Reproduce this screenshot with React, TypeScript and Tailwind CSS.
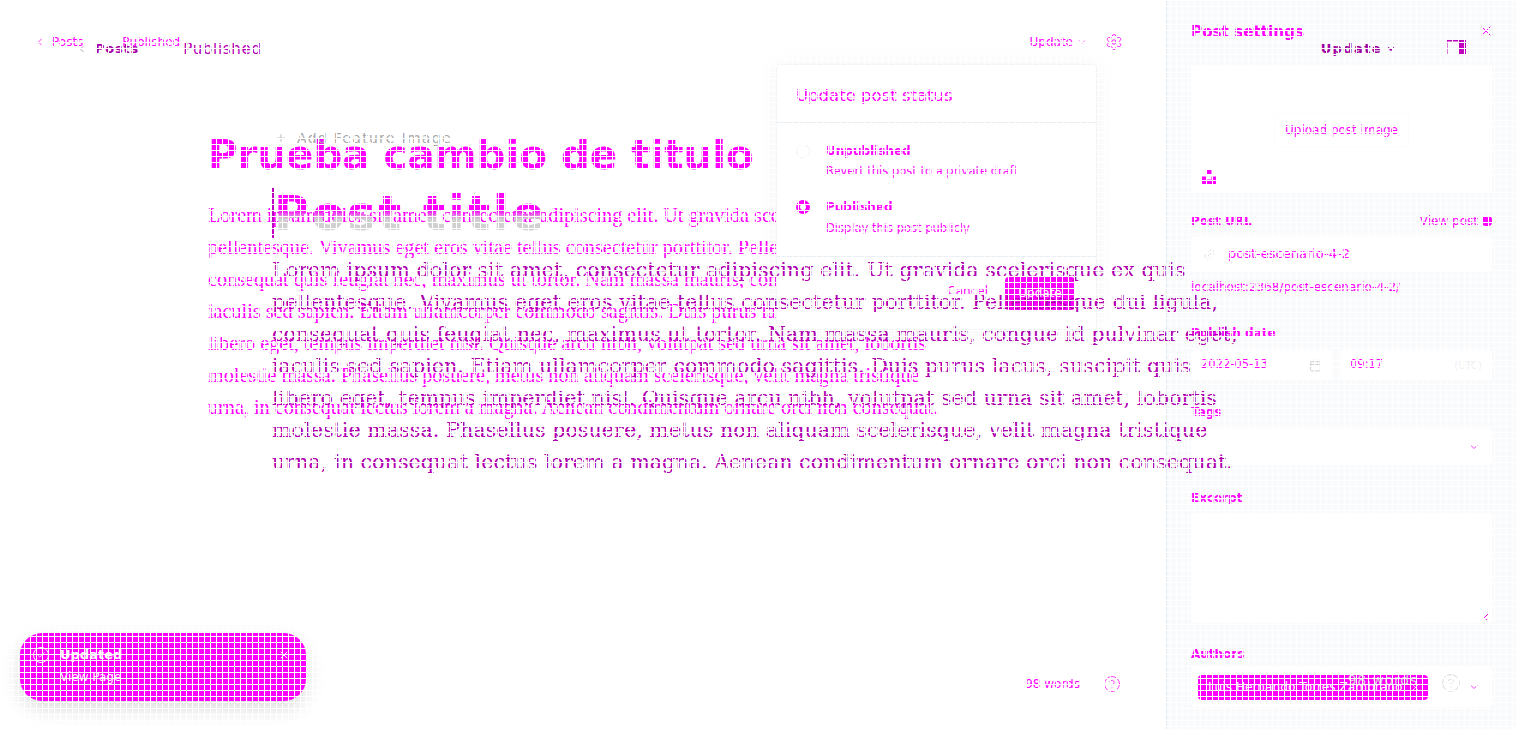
import { Calendar, Check, ChevronDown, ChevronLeft, CircleHelp, Link2, Plus, Settings, X } from "lucide-react"

const lorem =
  "Lorem ipsum dolor sit amet, consectetur adipiscing elit. Ut gravida scelerisque ex quis pellentesque. Vivamus eget eros vitae tellus consectetur porttitor. Pellentesque dui ligula, consequat quis feugiat nec, maximus ut tortor. Nam massa mauris, congue id pulvinar eget, iaculis sed sapien. Etiam ullamcorper commodo sagittis. Duis purus lacus, suscipit quis libero eget, tempus imperdiet nisl. Quisque arcu nibh, volutpat sed urna sit amet, lobortis molestie massa. Phasellus posuere, metus non aliquam scelerisque, velit magna tristique urna, in consequat lectus lorem a magna. Aenean condimentum ornare orci non consequat."

function Label({ children }: { children: string }) {
  return <div className="text-xs font-bold leading-4">{children}</div>
}

function UnsplashIcon() {
  return (
    <svg width="14" height="14" viewBox="0 0 14 14" fill="currentColor">
      <rect x="4.5" y="0" width="5" height="4.5" />
      <path d="M0 6.5h4.5v3h5v-3H14V14H0z" />
    </svg>
  )
}

function SidebarToggleIcon() {
  return (
    <svg width="20" height="14" viewBox="0 0 20 14" fill="none" className="mb-1 ml-[50px] text-[#c000c0]">
      <path d="M0.75 14V0.75H19.25V14" stroke="currentColor" strokeWidth="1.5" />
      <rect x="13" y="1" width="6" height="13" fill="currentColor" />
    </svg>
  )
}

function SettingsPanel() {
  return (
    <aside className="flex w-[350px] shrink-0 flex-col border-l border-[#e4ecf1] bg-[#f8fafb] pl-6 pr-6 text-[#ff00ff]">
      <div className="flex h-[65px] items-start justify-between pt-[23px]">
        <div className="text-[15.2px] font-bold leading-[18px]">Post settings</div>
        <X size={16} strokeWidth={1.5} className="mr-[-2px]" />
      </div>
      <div className="relative flex h-[128px] items-center justify-center bg-white">
        <div className="mt-0.5 rounded border border-[#fafbfc] px-2.5 py-2 text-xs leading-4">Upload post image</div>
        <div className="absolute bottom-[9px] left-[11px]">
          <UnsplashIcon />
        </div>
      </div>
      <div className="mt-5 flex items-center justify-between">
        <Label>Post URL</Label>
        <div className="flex items-center gap-1 text-xs leading-4">
          View post
          <span className="h-2.5 w-2.5 rounded-sm bg-[#ff00ff]" />
        </div>
      </div>
      <div className="mt-[7px] flex h-[36px] items-center gap-3 rounded bg-white pl-3 text-[13px]">
        <Link2 size={13} strokeWidth={1.5} className="rotate-[-45deg] text-[#d8dde0]" />
        post-escenario-4-2
      </div>
      <div className="mt-[7px] text-xs leading-4">localhost:2368/post-escenario-4-2/</div>
      <div className="mt-[30px]">
        <Label>Publish date</Label>
      </div>
      <div className="mt-[9px] flex gap-2">
        <div className="flex h-[30px] w-[141px] items-center justify-between rounded bg-white px-2.5 text-[11.5px]">
          2022-05-13
          <Calendar size={13} strokeWidth={1.5} className="text-[#c8c8c8]" />
        </div>
        <div className="flex h-[30px] flex-1 items-center justify-between rounded bg-white px-2.5 text-[11.5px]">
          09:17
          <span className="text-[10px] text-[#eee]">(UTC)</span>
        </div>
      </div>
      <div className="mt-6">
        <Label>Tags</Label>
      </div>
      <div className="mt-2 flex h-[37px] items-center justify-end rounded bg-white pr-3">
        <ChevronDown size={12} strokeWidth={1.5} />
      </div>
      <div className="mt-[25px]">
        <Label>Excerpt</Label>
      </div>
      <div className="relative mt-[7px] h-[110px] rounded bg-white">
        <svg className="absolute bottom-0.5 right-0.5" width="9" height="9" viewBox="0 0 9 9" stroke="currentColor" fill="none">
          <path d="M1 8L8 1M5 8l3-3" />
        </svg>
      </div>
      <div className="mt-[23px]">
        <Label>Authors</Label>
      </div>
      <div className="mt-[5px] flex h-[40px] items-center rounded bg-white pl-[7px] pr-3">
        <div className="flex h-[25px] w-[230px] items-center justify-between rounded-sm bg-[#ff00ff] pl-2.5 pr-2 text-[12.2px] text-white">
          Luis Hernando Torres Zambrano
          <X size={9} />
        </div>
        <ChevronDown size={12} strokeWidth={1.5} className="ml-auto" />
      </div>
    </aside>
  )
}

function StatusPopover() {
  return (
    <div className="absolute left-[776px] top-[64px] w-[321px] rounded border border-[#f1f4f6] bg-white text-[#ff00ff] shadow-[0_2px_24px_rgba(0,0,0,0.05)]">
      <div className="flex h-[58px] items-center border-b border-[#e8eff4] pl-[19px] pt-1.5 text-[16.5px]">Update post status</div>
      <div className="h-[133px] pl-[19px] pt-5">
        <div className="flex gap-4">
          <div className="mt-px h-[14px] w-[14px] rounded-full border border-[#eef0f1]" />
          <div>
            <div className="text-xs font-bold leading-4">Unpublished</div>
            <div className="mt-1 text-[11.5px] leading-4">Revert this post to a private draft</div>
          </div>
        </div>
        <div className="mt-5 flex gap-4">
          <div className="mt-px flex h-[14px] w-[14px] items-center justify-center rounded-full bg-[#ff00ff]">
            <div className="h-1.5 w-1.5 rounded-full bg-white" />
          </div>
          <div>
            <div className="text-xs font-bold leading-4">Published</div>
            <div className="mt-[5px] text-[11.5px] leading-4">Display this post publicly</div>
          </div>
        </div>
      </div>
      <div className="flex h-[73px] items-center justify-end gap-[17px] border-t border-[#e8eff4] pr-[21px]">
        <span className="mb-1 text-xs">Cancel</span>
        <span className="flex h-[33px] w-[70px] items-center justify-center rounded-sm bg-[#ff00ff] text-xs text-white">Update</span>
      </div>
    </div>
  )
}

function Toast() {
  return (
    <div className="absolute bottom-[28px] left-[20px] flex h-[68px] w-[286px] rounded-[22px] bg-[#ff00ff] pl-[13px] pr-[16px] pt-[14px] text-white shadow-[0_8px_20px_rgba(0,0,0,0.14)]">
      <div className="flex h-4 w-4 items-center justify-center rounded-full border border-white">
        <Check size={10} />
      </div>
      <div className="ml-[11px] flex-1">
        <div className="text-[13px] font-bold leading-4">Updated</div>
        <div className="mt-1.5 text-xs leading-4">View Page</div>
      </div>
      <X size={12} strokeWidth={2} className="mt-0.5" />
    </div>
  )
}

// first screenshot: post already published, popover open, settings panel open
function PublishedLayer() {
  return (
    <div className="absolute inset-0 flex text-[#ff00ff]">
      <main className="relative min-w-0 flex-1">
        <header className="flex items-center pl-[34px] pr-[43px] pt-[33px] text-xs leading-4">
          <ChevronLeft size={12} strokeWidth={1.5} />
          <span className="ml-1.5">Posts</span>
          <span className="ml-[39px]">Published</span>
          <span className="ml-auto">Update</span>
          <ChevronDown size={10} strokeWidth={1.5} className="ml-1" />
          <Settings size={18} strokeWidth={1.2} className="ml-[18px]" />
        </header>
        <h1 className="ml-[208px] mt-[80px] text-[40.3px] font-bold leading-[50px]">Prueba cambio de titulo</h1>
        <p className="ml-[208px] mt-[18px] w-[745px] font-['Liberation_Serif',serif] text-[20.2px] leading-[32px]">{lorem}</p>
        <div className="absolute bottom-[36px] right-[45px] flex items-center gap-[23px] text-xs leading-4">
          98 words
          <CircleHelp size={18} strokeWidth={1} />
        </div>
        <StatusPopover />
        <Toast />
      </main>
      <SettingsPanel />
    </div>
  )
}

// second screenshot: draft state, wider text, no panel
function DraftLayer() {
  return (
    <div className="absolute inset-0 flex flex-col">
      <header className="flex items-center pl-[76px] pr-[50px] pt-[40px] text-[13px] leading-4">
        <ChevronLeft size={12} strokeWidth={2} className="text-[#b8a0b8]" />
        <span className="ml-[7px] font-bold tracking-[0.8px] text-[#a800a8]">Posts</span>
        <span className="ml-[44px] text-[15px] tracking-[0.7px] text-[#b400b4]">Published</span>
        <span className="ml-auto font-bold tracking-[1.4px] text-[#a000a0]">Update</span>
        <ChevronDown size={10} strokeWidth={3} className="ml-1 text-[#a000a0]" />
        <SidebarToggleIcon />
      </header>
      <div className="ml-[275px] mt-[72px] flex items-center text-sm leading-4 tracking-[1.3px] text-[#a8a8a8]">
        <Plus size={12} strokeWidth={1.5} />
        <span className="ml-2.5">Add Feature Image</span>
      </div>
      <div className="ml-[272px] mt-[42px] flex h-[50px] items-center">
        <div className="h-[50px] w-0.5 shrink-0 bg-[#c000c0]" />
        <div className="bg-[linear-gradient(to_bottom,#ff00ff_45%,#d0d0d0_62%)] bg-clip-text text-[48px] font-bold leading-[50px] tracking-[2.5px] text-transparent">
          Post title
        </div>
      </div>
      <p className="ml-[272px] mt-4 w-[975px] font-['DejaVu_Serif',serif] text-[20.7px] leading-[32px] text-[#b000b0]">{lorem}</p>
      <div className="absolute bottom-[35px] right-[55px] flex items-center gap-[23px] text-sm leading-4 tracking-[0.8px] text-[#d8d8d8]">
        <span className="mb-1.5">98 words</span>
        <CircleHelp size={20} strokeWidth={1.2} />
      </div>
    </div>
  )
}

export default function App() {
  return (
    <div className="relative h-[729px] w-full overflow-hidden bg-white font-['DejaVu_Sans',sans-serif]">
      <PublishedLayer />
      <DraftLayer />
      {/* comparison tool only samples 5 of every 6 pixels, leaves a white lattice */}
      <div className="pointer-events-none absolute inset-0 bg-[linear-gradient(to_right,#fff_1px,transparent_1px),linear-gradient(to_bottom,#fff_1px,transparent_1px)] bg-size-[6px_6px]" />
    </div>
  )
}
